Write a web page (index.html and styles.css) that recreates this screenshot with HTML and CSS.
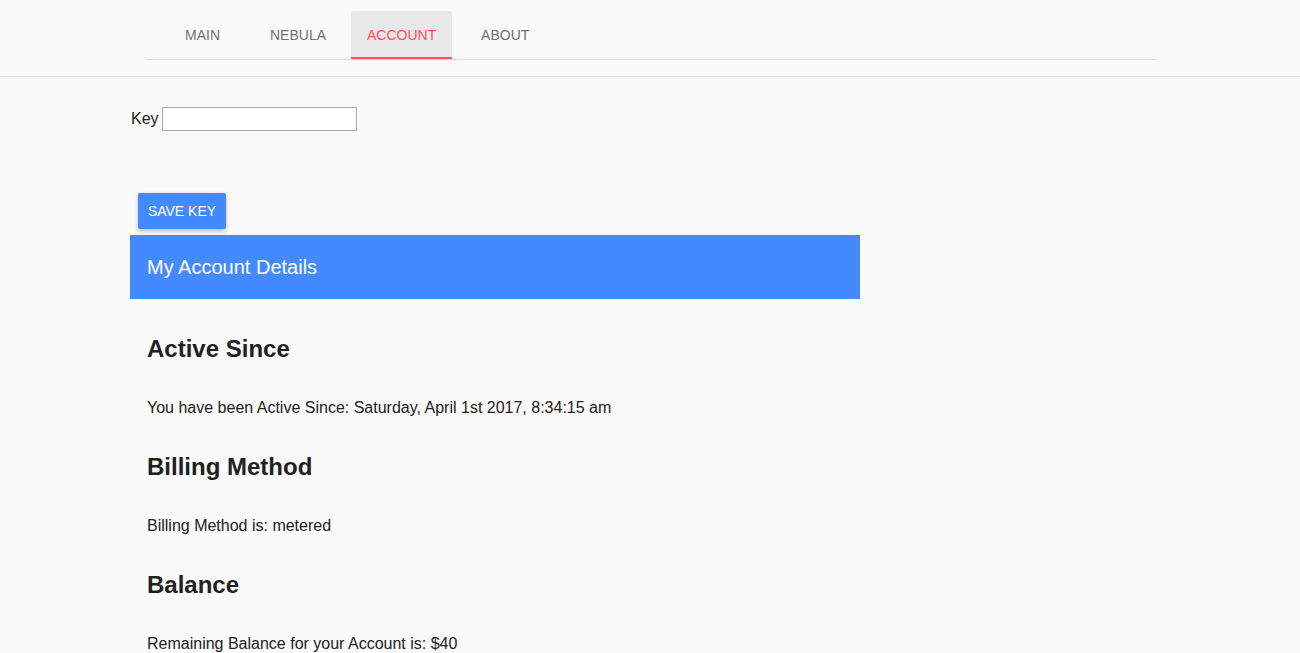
FILE: index.html
```html
<!DOCTYPE html>
<html>
<head>
<meta charset="utf-8">
<link rel="stylesheet" href="styles.css">
</head>
<body>
<header class="topbar">
  <nav class="tabs">
    <a class="tab tab-first">MAIN</a>
    <a class="tab">NEBULA</a>
    <a class="tab active">ACCOUNT</a>
    <a class="tab">ABOUT</a>
  </nav>
</header>
<main class="content">
  <div class="key-row">
    <label class="key-label">Key</label>
    <input class="key-input" type="text">
  </div>
  <button class="save-btn">SAVE KEY</button>
  <div class="panel-title">My Account Details</div>
  <section class="details">
    <h2 class="detail-h">Active Since</h2>
    <p class="detail-p">You have been Active Since: Saturday, April 1st 2017, 8:34:15 am</p>
    <h2 class="detail-h">Billing Method</h2>
    <p class="detail-p">Billing Method is: metered</p>
    <h2 class="detail-h">Balance</h2>
    <p class="detail-p">Remaining Balance for your Account is: $40</p>
  </section>
</main>
</body>
</html>
```
FILE: styles.css
```css
html, body {
  margin: 0;
  padding: 0;
  background: #fafafa;
  font-family: "Liberation Sans", Arial, sans-serif;
  color: #212121;
}
.topbar {
  height: 77px;
  box-sizing: border-box;
  border-bottom: 1px solid #e0e0e0;
  padding-top: 11px;
}
.tabs {
  display: flex;
  gap: 8px;
  margin-left: 146px;
  width: 1011px;
  box-sizing: border-box;
  padding-left: 9px;
  border-bottom: 1px solid #dcdcdc;
  height: 49px;
}
.tab {
  min-width: 90px;
  box-sizing: border-box;
  padding: 0 16px;
  height: 48px;
  display: flex;
  align-items: center;
  justify-content: center;
  font-size: 14px;
  color: #707070;
  border-radius: 2px 2px 0 0;
  cursor: pointer;
}
.tab-first {
  padding-left: 21px;
}
.tab.active {
  background: #e8e8e8;
  color: #ff5252;
  box-shadow: inset 0 -2px 0 #ff5252;
}
.content {
  padding-left: 130px;
  display: flex;
  flex-direction: column;
  align-items: flex-start;
}
.key-row {
  display: flex;
  align-items: center;
  margin-top: 30px;
  height: 24px;
}
.key-label {
  font-size: 16px;
  margin-right: 4px;
  margin-left: 1px;
}
.key-input {
  width: 195px;
  height: 24px;
  box-sizing: border-box;
  border: 1px solid #a9a9a9;
  background: #fff;
  margin: 0 0 0 -1px;
  padding: 0 2px;
}
.save-btn {
  margin: 62px 0 0 8px;
  height: 36px;
  width: 88px;
  padding: 0;
  border: none;
  border-radius: 2px;
  background: #448aff;
  color: #fff;
  font-family: "Liberation Sans", Arial, sans-serif;
  font-size: 14px;
  box-shadow: 0 2px 4px rgba(0,0,0,0.25);
}
.panel-title {
  margin-top: 6px;
  width: 730px;
  height: 64px;
  box-sizing: border-box;
  padding-left: 17px;
  display: flex;
  align-items: center;
  background: #448aff;
  color: #fff;
  font-size: 20px;
}
.details {
  padding: 36px 0 0 17px;
}
.detail-h {
  margin: 0 0 36px;
  font-size: 24px;
  line-height: 28px;
  font-weight: bold;
}
.detail-p {
  margin: 0 0 36px;
  font-size: 16px;
  line-height: 18px;
}
```
